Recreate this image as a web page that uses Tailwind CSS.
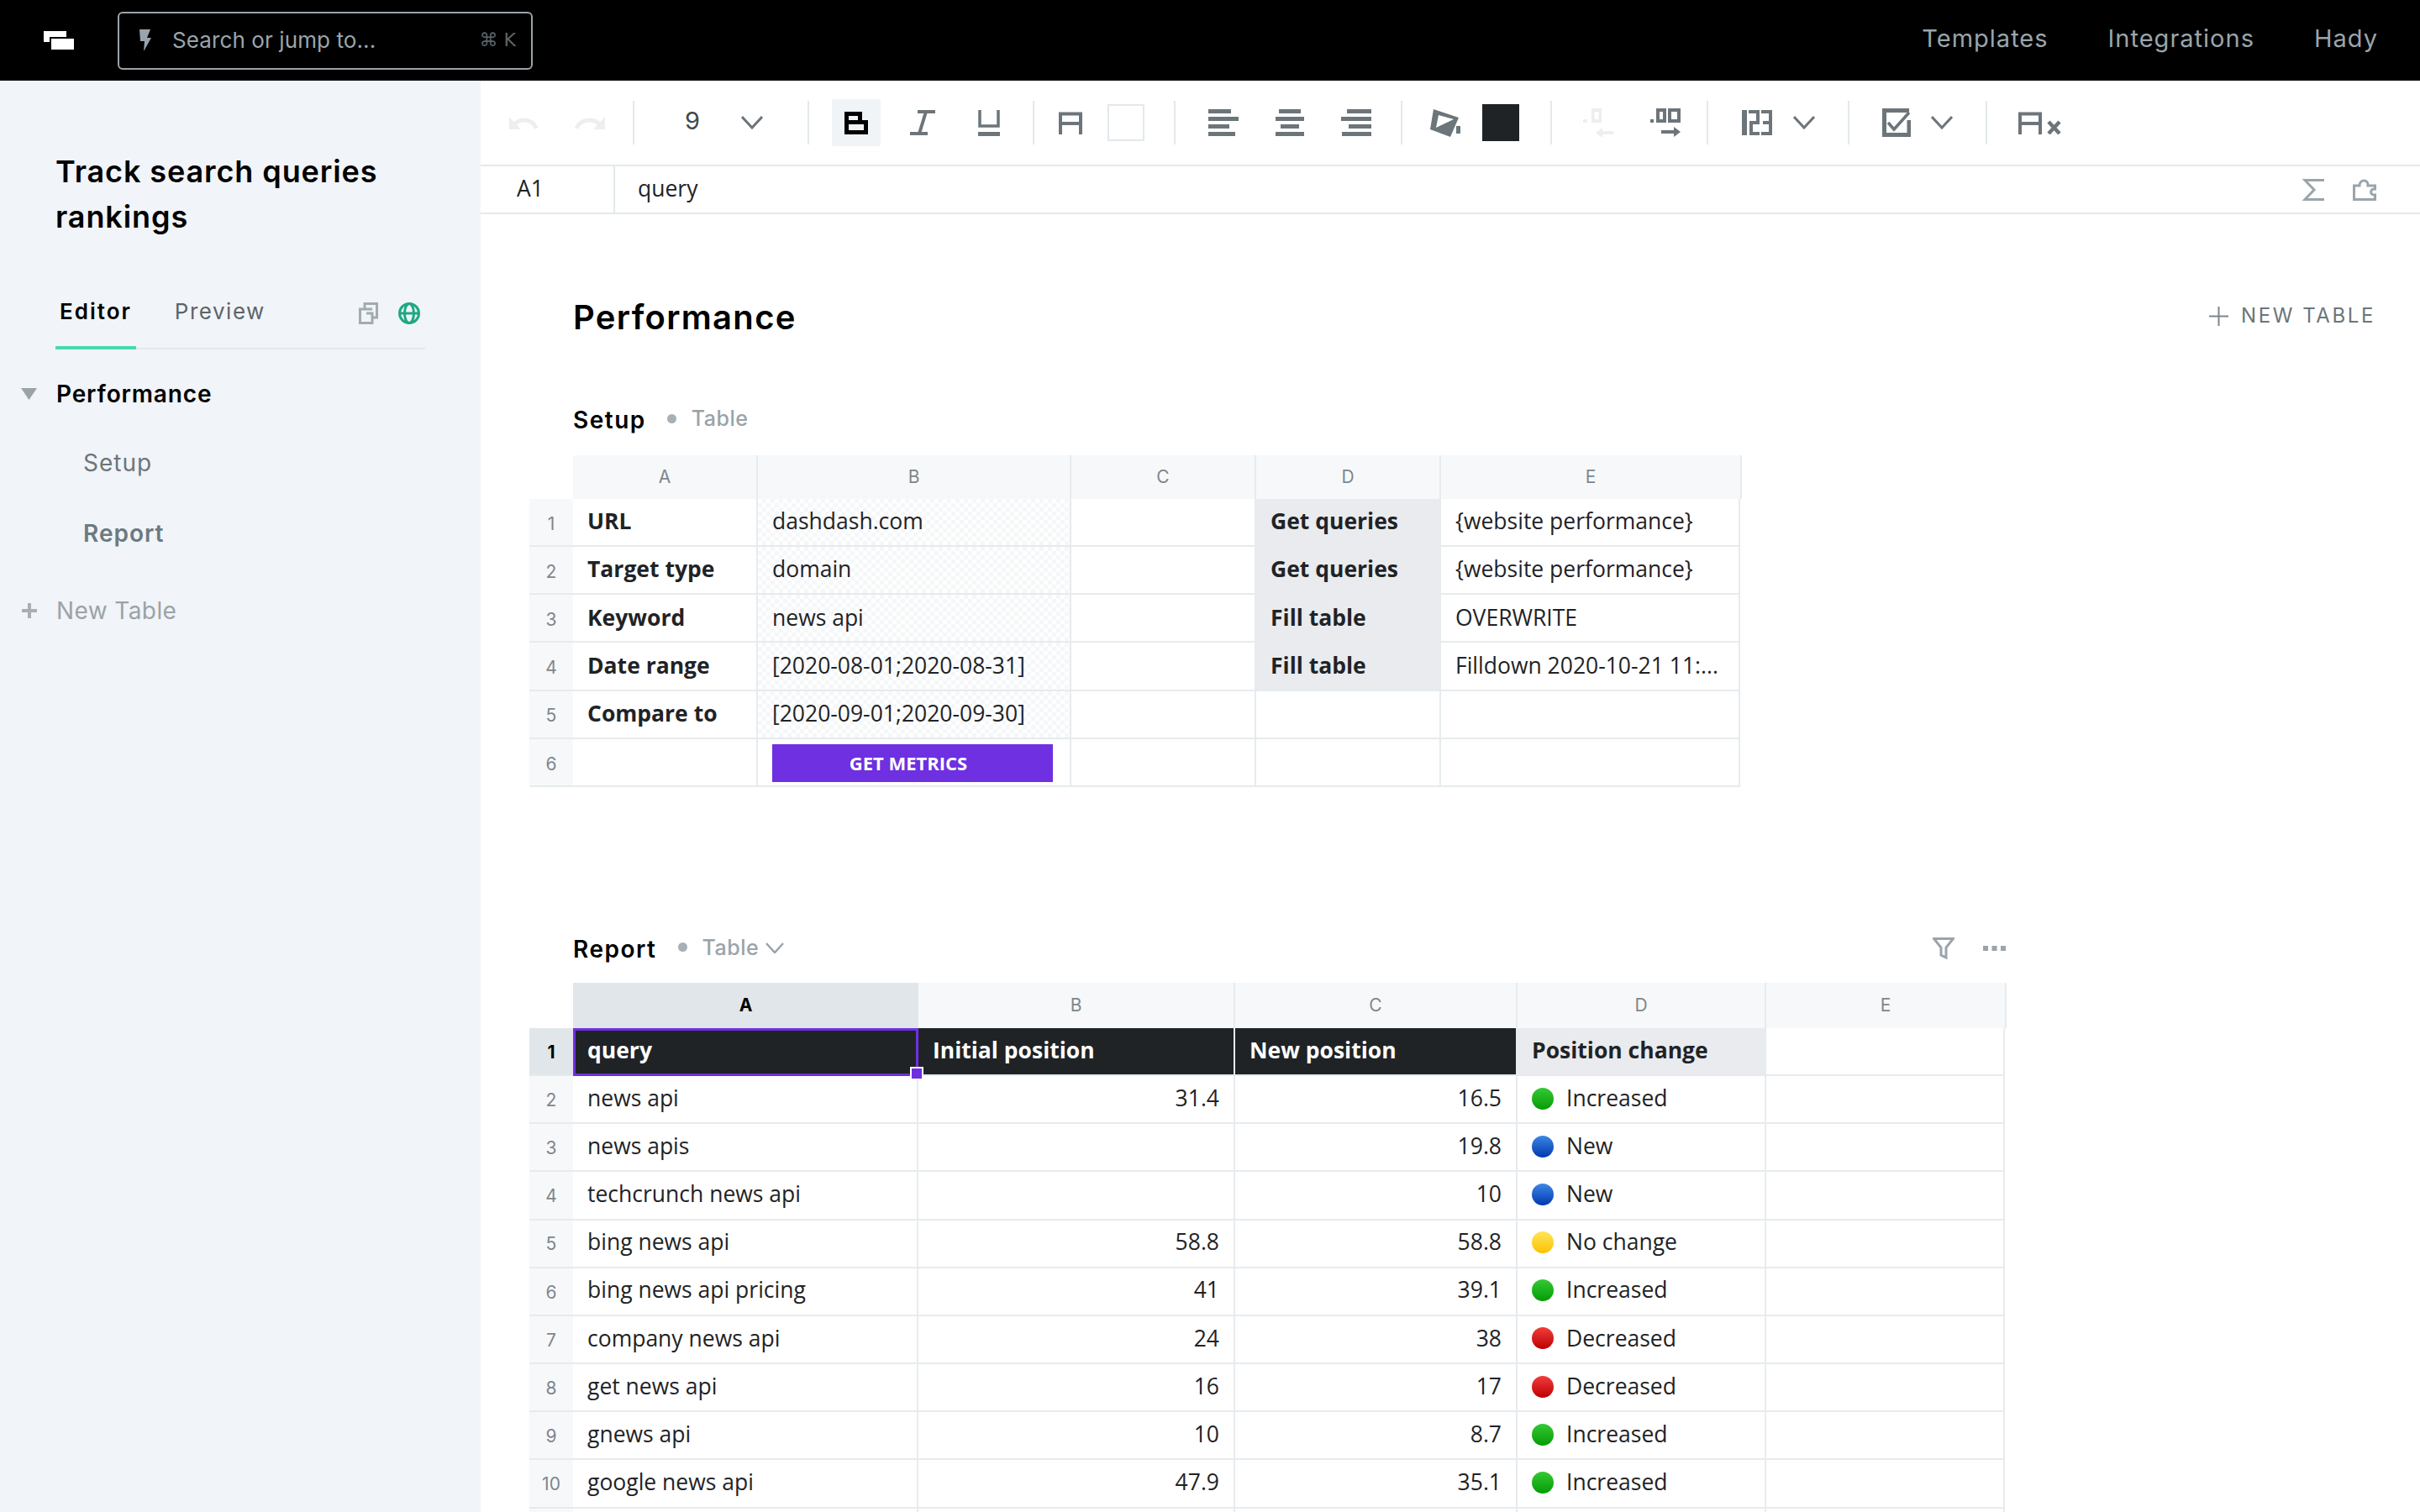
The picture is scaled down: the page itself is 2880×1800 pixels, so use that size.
<!DOCTYPE html>
<html lang="en">
<head>
<meta charset="UTF-8">
<title>Track search queries rankings</title>
<script src="https://cdn.jsdelivr.net/npm/@tailwindcss/browser@4"></script>
</head>
<body class="bg-white">
<div class="w-[2880px] h-[1800px] overflow-hidden flex flex-col font-['Inter',sans-serif]">

    <!-- Top bar -->
    <header class="h-[96px] shrink-0 bg-black flex items-center">
        <svg class="ml-[52px]" width="36" height="22" viewBox="0 0 36 22"><rect width="27" height="13" fill="#fff"/><rect x="7" y="7" width="29" height="15" fill="#000"/><rect x="9" y="9" width="27" height="13" fill="#fff"/></svg>
        <div class="ml-[52px] w-[494px] h-[69px] border-2 border-[#9aa3a8] rounded-[6px] flex items-center">
            <svg class="ml-[23px]" width="15" height="26" viewBox="0 0 15 26"><path d="M1 0H14L10 10H15L6 26L7 14H2Z" fill="#9aa5ab"/></svg>
            <span class="ml-[25px] text-[26px] tracking-[0.1px] text-[#9aa5ab] -translate-y-[1px]">Search or jump to...</span>
            <span class="ml-auto mr-[18px] text-[22px] text-[#5d6468] font-['DejaVu_Sans'] -translate-y-[1px]">⌘ K</span>
        </div>
        <nav class="ml-auto mr-[50px] flex gap-[71px] text-[29px] tracking-[1px] text-[#9aa5ab] -translate-y-[2px]">
            <a href="#">Templates</a>
            <a href="#">Integrations</a>
            <a href="#">Hady</a>
        </nav>
    </header>

    <div class="flex flex-1 min-h-0">
        <!-- Sidebar -->
        <aside class="w-[572px] shrink-0 bg-[#f1f4f8] pt-[81px]">
            <h1 class="ml-[66px] w-[440px] text-[36px] leading-[54px] font-semibold tracking-[0.9px] text-black">Track search queries rankings</h1>
            <div class="ml-[66px] mt-[45px] w-[440px] h-[86px] pb-[3px] border-b-2 border-[#e3e9ec] flex items-center relative">
                <span class="ml-[5px] text-[26px] font-semibold tracking-[2px] text-black">Editor</span>
                <span class="ml-[51px] text-[26px] tracking-[1.5px] text-[#5d6468]">Preview</span>
                <svg class="ml-auto translate-y-[2px]" width="23" height="26" viewBox="0 0 23 26" fill="none" stroke="#a2abb0" stroke-width="3"><path d="M7 7V1.5H21.5V18H16"/><path d="M16 8H1.5V24.5H16V13H9"/></svg>
                <svg class="ml-[24px] mr-[6px] translate-y-[2px]" width="26" height="26" viewBox="0 0 26 26" fill="none" stroke="#1fa884" stroke-width="3"><circle cx="13" cy="13" r="11.5"/><ellipse cx="13" cy="13" rx="5.5" ry="11.5"/><path d="M2 13H24"/></svg>
                <div class="absolute left-0 -bottom-[2px] w-[96px] h-[4px] bg-[#4ad8b0]"></div>
            </div>
            <div class="mt-[32px] h-[42px] flex items-center">
                <svg class="ml-[25px]" width="19" height="14" viewBox="0 0 19 14"><path d="M0 0H19L9.5 14Z" fill="#9aa3a8"/></svg>
                <span class="ml-[23px] text-[28px] font-semibold tracking-[0.85px] text-black">Performance</span>
            </div>
            <div class="ml-[99px] mt-[40px] h-[42px] flex items-center text-[28px] tracking-[1px] text-[#6c757a]">Setup</div>
            <div class="ml-[99px] mt-[42px] h-[42px] flex items-center text-[28px] tracking-[1px] font-semibold text-[#6c7a80]">Report</div>
            <div class="mt-[50px] h-[42px] flex items-center">
                <svg class="ml-[26px]" width="18" height="18" viewBox="0 0 18 18"><path d="M7 0H11V7H18V11H11V18H7V11H0V7H7Z" fill="#a8b0b5"/></svg>
                <span class="ml-[23px] text-[28px] tracking-[0.4px] text-[#9aa3a8]">New Table</span>
            </div>
        </aside>

        <main class="flex-1 min-w-0 flex flex-col">
            <!-- Toolbar -->
            <div class="h-[102px] shrink-0 border-b-2 border-[#e3e9ec] flex items-center">
                <svg class="ml-[34px]" width="34" height="16" viewBox="0 0 34 16" fill="none"><path d="M32 15C29 5 15 1 6 10" stroke="#eceef0" stroke-width="5"/><path d="M0 1V16H14Z" fill="#eceef0"/></svg>
                <svg class="ml-[44px]" width="36" height="16" viewBox="0 0 36 16" fill="none"><path d="M2 15C6 5 20 1 30 10" stroke="#eceef0" stroke-width="5"/><path d="M36 1V16H22Z" fill="#eceef0"/></svg>
                <div class="ml-[33px] w-[2px] h-[52px] bg-[#e3e9ec]"></div>
                <span class="ml-[60px] w-[17px] text-[29px] text-[#444a4e] -translate-y-[2px]">9</span>
                <svg class="ml-[50px]" width="26" height="16" viewBox="0 0 26 16" fill="none" stroke="#6c757a" stroke-width="3"><path d="M1 1L13 14L25 1"/></svg>
                <div class="ml-[53px] w-[2px] h-[52px] bg-[#e3e9ec]"></div>
                <div class="ml-[27px] w-[58px] h-[56px] bg-[#f1f4f7] rounded-[2px] flex items-center justify-center">
                    <svg width="28" height="27" viewBox="0 0 28 27"><path fill-rule="evenodd" d="M0 0H21V10H28V27H0ZM5 5V10H16V5ZM5 15V22H23V15Z" fill="#000"/></svg>
                </div>
                <svg class="ml-[35px]" width="30" height="30" viewBox="0 0 30 30" fill="none" stroke="#6c757a" stroke-width="4"><path d="M9 2H30"/><path d="M0 28H21"/><path d="M19 2L11 28"/></svg>
                <svg class="ml-[51px]" width="26" height="31" viewBox="0 0 26 31" fill="none"><path d="M2 0V19H24V0" stroke="#6c757a" stroke-width="3.5"/><rect y="26" width="26" height="5" fill="#6c757a"/></svg>
                <div class="ml-[39px] w-[2px] h-[52px] bg-[#e3e9ec]"></div>
                <svg class="ml-[29px]" width="28" height="27" viewBox="0 0 28 27" fill="none" stroke="#6c757a" stroke-width="4"><path d="M2 27V2.5H26V27"/><path d="M2 14H26"/></svg>
                <div class="ml-[30px] w-[44px] h-[44px] border-2 border-[#e3e9ec] bg-white"></div>
                <div class="ml-[35px] w-[2px] h-[52px] bg-[#e3e9ec]"></div>
                <svg class="ml-[39px]" width="36" height="32" viewBox="0 0 36 32" fill="#6c757a"><rect width="27" height="5"/><rect y="9" width="36" height="5"/><rect y="18" width="25" height="5"/><rect y="27" width="32" height="5"/></svg>
                <svg class="ml-[44px]" width="34" height="32" viewBox="0 0 34 32" fill="#6c757a"><rect x="4" width="26" height="5"/><rect y="9" width="34" height="5"/><rect x="6" y="18" width="22" height="5"/><rect y="27" width="34" height="5"/></svg>
                <svg class="ml-[44px]" width="36" height="32" viewBox="0 0 36 32" fill="#6c757a"><rect x="7" width="29" height="5"/><rect y="9" width="36" height="5"/><rect x="9" y="18" width="27" height="5"/><rect x="1" y="27" width="35" height="5"/></svg>
                <div class="ml-[35px] w-[2px] h-[52px] bg-[#e3e9ec]"></div>
                <svg class="ml-[33px]" width="40" height="33" viewBox="0 0 40 33"><path fill-rule="evenodd" d="M4 0L34 10L24 33L0 24ZM10 7L7 22L28 12Z" fill="#6c757a"/><rect x="31" y="20" width="5" height="9" fill="#6c757a"/></svg>
                <div class="ml-[22px] w-[44px] h-[44px] bg-[#1f2326]"></div>
                <div class="ml-[37px] w-[2px] h-[52px] bg-[#e3e9ec]"></div>
                <svg class="ml-[37px]" width="36" height="35" viewBox="0 0 36 35" fill="#eceef0"><rect y="13" width="5" height="4"/><path fill-rule="evenodd" d="M10 0H22V17H10ZM13.500 4V13H18.500V4Z"/><path d="M15 29L23 23V27H36V31H23V35Z"/></svg>
                <!-- .00 with arrow -->
                <svg class="ml-[44px]" width="36" height="34" viewBox="0 0 36 34" fill="#6c757a"><rect y="13" width="4" height="4"/><path fill-rule="evenodd" d="M7 0H19V17H7ZM11 4V13H15V4Z"/><path fill-rule="evenodd" d="M21 0H36V17H21ZM25 4V13H32V4Z"/><path d="M36 28L28 22V26H13V30H28V34Z"/></svg>
                <div class="ml-[31px] w-[2px] h-[52px] bg-[#e3e9ec]"></div>
                <!-- 123 -->
                <svg class="ml-[40px]" width="36" height="30" viewBox="0 0 36 30" fill="none" stroke="#6c757a" stroke-width="4"><path d="M3 0V30" stroke-width="6"/><path d="M8 2H19V15H11V28H21"/><path d="M23 2H34V28H23"/><path d="M25 15H34"/></svg>
                <svg class="ml-[25px]" width="26" height="16" viewBox="0 0 26 16" fill="none" stroke="#6c757a" stroke-width="3"><path d="M1 1L13 14L25 1"/></svg>
                <div class="ml-[39px] w-[2px] h-[52px] bg-[#e3e9ec]"></div>
                <svg class="ml-[39px]" width="34" height="34" viewBox="0 0 34 34" fill="none" stroke="#6c757a"><path d="M32 2.500H2.500V31.500H32V14" stroke-width="5"/><path d="M7 17L14 25L32 5" stroke-width="3.500"/></svg>
                <svg class="ml-[24px]" width="26" height="16" viewBox="0 0 26 16" fill="none" stroke="#6c757a" stroke-width="3"><path d="M1 1L13 14L25 1"/></svg>
                <div class="ml-[39px] w-[2px] h-[52px] bg-[#e3e9ec]"></div>
                <svg class="ml-[37px]" width="51" height="27" viewBox="0 0 51 27" fill="none" stroke="#6c757a" stroke-width="4"><path d="M2 27V2.500H26V27"/><path d="M2 14H26"/><path d="M36 12L49 26M49 12L36 26" stroke-width="4.500"/></svg>
            </div>

            <!-- Formula bar -->
            <div class="h-[57px] shrink-0 border-b-2 border-[#e3e9ec] flex items-center font-['Open_Sans'] text-[26.5px] text-[#1f2326]">
                <div class="w-[160px] h-full pb-[2px] border-r-2 border-[#e3e9ec] flex items-center pl-[43px]">A1</div>
                <span class="ml-[27px] -translate-y-[1px]">query</span>
                <svg class="ml-auto" width="26" height="26" viewBox="0 0 26 26" fill="none" stroke="#9aa5ab" stroke-width="3"><path d="M26 1.500H3L14 13L3 24.500H26"/></svg>
                <svg class="ml-[34px] mr-[52px]" width="28" height="26" viewBox="0 0 28 26" fill="none" stroke="#9aa5ab" stroke-width="3"><path d="M1.500 24.500V8H8C8 0 19 0 18 8H26.500V12C20 11 20 20 26.500 19V24.500Z"/></svg>
            </div>

            <!-- Canvas -->
            <div class="flex-1 min-h-0 pt-[93px] pl-[58px] pr-[53px] overflow-hidden">
                <div class="ml-[52px] h-[60px] flex items-center justify-between">
                    <h2 class="text-[40px] font-semibold tracking-[1.3px] text-black">Performance</h2>
                    <div class="flex items-center text-[24px] tracking-[2.6px] text-[#6c757a] -translate-y-[2px]">
                        <svg width="23" height="23" viewBox="0 0 23 23"><path d="M10.500 0H12.500V10.500H23V12.500H12.500V23H10.500V12.500H0V10.500H10.500Z" fill="#7d868c"/></svg>
                        <span class="ml-[15px]">NEW TABLE</span>
                    </div>
                </div>

                <!-- Setup -->
                <div class="ml-[52px] mt-[71px] h-[40px] flex items-center">
                    <h3 class="text-[28px] font-semibold tracking-[1.5px] text-black translate-y-[1px]">Setup</h3>
                    <div class="ml-[25px] w-[11px] h-[11px] rounded-full bg-[#a8b0b5] -translate-y-[1px]"></div>
                    <span class="ml-[18px] text-[25px] font-medium tracking-[0.5px] text-[#9aa3a8]">Table</span>
                </div>
                <div class="mt-[23px] grid grid-cols-[52px_220px_373px_220px_220px_358px] h-[52px] text-[21px] text-[#7d868c] [&>div]:flex [&>div]:items-center [&>div]:justify-center [&>div]:bg-[#f7f8fa] [&>div]:border-r-2 [&>div]:border-[#e6ebee]">
                    <div class="bg-white! border-r-0!"></div>
                    <div>A</div><div>B</div><div>C</div><div>D</div><div>E</div>
                </div>
                <div class="grid grid-cols-[52px_220px_373px_220px_220px_358px] auto-rows-[57.17px] font-['Open_Sans'] text-[26.5px] text-[#1f2326] [&>div]:flex [&>div]:items-center [&>div]:whitespace-nowrap [&>div]:px-[17px] [&>div]:pb-[1px] [&>div]:border-r-2 [&>div]:border-b-2 [&>div]:border-[#e6ebee]">
                    <div class="justify-center bg-[#f7f8fa] border-r-0! pt-[5px] font-['Inter'] text-[21px] text-[#7d868c]">1</div><div class="font-bold">URL</div><div class="bg-[image:repeating-conic-gradient(#f5f7f8_0_25%,#fff_0_50%)] bg-[length:10px_10px]">dashdash.com</div><div></div><div class="bg-[#e9ebee] font-bold">Get queries</div><div class="mr-[2px]">{website performance}</div>
                    <div class="justify-center bg-[#f7f8fa] border-r-0! pt-[5px] font-['Inter'] text-[21px] text-[#7d868c]">2</div><div class="font-bold">Target type</div><div class="bg-[image:repeating-conic-gradient(#f5f7f8_0_25%,#fff_0_50%)] bg-[length:10px_10px]">domain</div><div></div><div class="bg-[#e9ebee] font-bold">Get queries</div><div class="mr-[2px]">{website performance}</div>
                    <div class="justify-center bg-[#f7f8fa] border-r-0! pt-[5px] font-['Inter'] text-[21px] text-[#7d868c]">3</div><div class="font-bold">Keyword</div><div class="bg-[image:repeating-conic-gradient(#f5f7f8_0_25%,#fff_0_50%)] bg-[length:10px_10px]">news api</div><div></div><div class="bg-[#e9ebee] font-bold">Fill table</div><div class="mr-[2px]">OVERWRITE</div>
                    <div class="justify-center bg-[#f7f8fa] border-r-0! pt-[5px] font-['Inter'] text-[21px] text-[#7d868c]">4</div><div class="font-bold">Date range</div><div class="bg-[image:repeating-conic-gradient(#f5f7f8_0_25%,#fff_0_50%)] bg-[length:10px_10px]">[2020-08-01;2020-08-31]</div><div></div><div class="bg-[#e9ebee] font-bold">Fill table</div><div class="mr-[2px]">Filldown 2020-10-21 11:...</div>
                    <div class="justify-center bg-[#f7f8fa] border-r-0! pt-[5px] font-['Inter'] text-[21px] text-[#7d868c]">5</div><div class="font-bold">Compare to</div><div class="bg-[image:repeating-conic-gradient(#f5f7f8_0_25%,#fff_0_50%)] bg-[length:10px_10px]">[2020-09-01;2020-09-30]</div><div></div><div></div><div class="mr-[2px]"></div>
                    <div class="justify-center bg-[#f7f8fa] border-r-0! pt-[5px] font-['Inter'] text-[21px] text-[#7d868c]">6</div><div></div><div><button class="w-[334px] h-[45px] mt-[4px] shrink-0 bg-[#6e30e0] text-white text-[22px] font-bold pr-[10px]">GET METRICS</button></div><div></div><div></div><div class="mr-[2px]"></div>
                </div>

                <!-- Report -->
                <div class="ml-[52px] mt-[172px] w-[1705px] h-[40px] flex items-center">
                    <h3 class="text-[28px] font-semibold tracking-[1.5px] text-black translate-y-[1px]">Report</h3>
                    <div class="ml-[25px] w-[11px] h-[11px] rounded-full bg-[#a8b0b5] -translate-y-[1px]"></div>
                    <span class="ml-[18px] text-[25px] font-medium tracking-[0.5px] text-[#9aa3a8]">Table</span>
                    <svg class="ml-[8px]" width="22" height="13" viewBox="0 0 22 13" fill="none" stroke="#9aa3a8" stroke-width="2.500"><path d="M1 1L11 12L21 1"/></svg>
                    <svg class="ml-auto" width="26" height="26" viewBox="0 0 26 26" fill="none" stroke="#9aa5ab" stroke-width="3"><path d="M1.500 1.500H24.500L16 12V24L10 21V12Z"/></svg>
                    <svg class="ml-[34px]" width="27" height="6" viewBox="0 0 27 6" fill="#9aa5ab"><rect width="6" height="6"/><rect x="10.500" width="6" height="6"/><rect x="21" width="6" height="6"/></svg>
                </div>
                <div class="mt-[21px] grid grid-cols-[52px_411px_377px_336px_296px_286px] h-[54px] text-[21px] text-[#7d868c] [&>div]:flex [&>div]:items-center [&>div]:justify-center [&>div]:border-r-2 [&>div]:border-[#e6ebee]">
                    <div class="border-r-0!"></div>
                    <div class="bg-[#e0e6e9] font-bold text-black border-r-0!">A</div><div class="bg-[#f7f8fa]">B</div><div class="bg-[#f7f8fa]">C</div><div class="bg-[#f7f8fa]">D</div><div class="bg-[#f7f8fa]">E</div>
                </div>
                <div class="grid grid-cols-[52px_411px_377px_336px_296px_286px] auto-rows-[57.17px] font-['Open_Sans'] text-[26.5px] text-[#1f2326] [&>div]:flex [&>div]:items-center [&>div]:whitespace-nowrap [&>div]:px-[17px] [&>div]:pb-[2px] [&>div]:border-r-2 [&>div]:border-b-2 [&>div]:border-[#e6ebee]">
                    <div class="justify-center bg-[#e0e6e9] border-r-0! pt-[4px] font-['Inter'] font-bold text-[21px] text-black">1</div>
                    <div class="relative bg-[#1f2326] text-white font-bold outline-[3px] outline-[#6e30e0] -outline-offset-[3px] z-10">query<span class="absolute -right-[8px] -bottom-[7px] w-[16px] h-[16px] bg-[#6e30e0] border-2 border-white"></span></div>
                    <div class="bg-[#1f2326] text-white font-bold">Initial position</div><div class="bg-[#1f2326] text-white font-bold">New position</div><div class="bg-[#e9ebee] font-bold">Position change</div><div class="mr-[2px]"></div>

                    <div class="justify-center bg-[#f7f8fa] border-r-0! pt-[4px] font-['Inter'] text-[21px] text-[#7d868c]">2</div><div>news api</div><div class="justify-end">31.4</div><div class="justify-end">16.5</div><div><i class="w-[26px] h-[26px] rounded-full mr-[15px] bg-[linear-gradient(#35c935,#049c04)]"></i>Increased</div><div class="mr-[2px]"></div>
                    <div class="justify-center bg-[#f7f8fa] border-r-0! pt-[4px] font-['Inter'] text-[21px] text-[#7d868c]">3</div><div>news apis</div><div class="justify-end"></div><div class="justify-end">19.8</div><div><i class="w-[26px] h-[26px] rounded-full mr-[15px] bg-[linear-gradient(#3c87e4,#0038b0)]"></i>New</div><div class="mr-[2px]"></div>
                    <div class="justify-center bg-[#f7f8fa] border-r-0! pt-[4px] font-['Inter'] text-[21px] text-[#7d868c]">4</div><div>techcrunch news api</div><div class="justify-end"></div><div class="justify-end">10</div><div><i class="w-[26px] h-[26px] rounded-full mr-[15px] bg-[linear-gradient(#3c87e4,#0038b0)]"></i>New</div><div class="mr-[2px]"></div>
                    <div class="justify-center bg-[#f7f8fa] border-r-0! pt-[4px] font-['Inter'] text-[21px] text-[#7d868c]">5</div><div>bing news api</div><div class="justify-end">58.8</div><div class="justify-end">58.8</div><div><i class="w-[26px] h-[26px] rounded-full mr-[15px] bg-[linear-gradient(#ffe55a,#fcc200)]"></i>No change</div><div class="mr-[2px]"></div>
                    <div class="justify-center bg-[#f7f8fa] border-r-0! pt-[4px] font-['Inter'] text-[21px] text-[#7d868c]">6</div><div>bing news api pricing</div><div class="justify-end">41</div><div class="justify-end">39.1</div><div><i class="w-[26px] h-[26px] rounded-full mr-[15px] bg-[linear-gradient(#35c935,#049c04)]"></i>Increased</div><div class="mr-[2px]"></div>
                    <div class="justify-center bg-[#f7f8fa] border-r-0! pt-[4px] font-['Inter'] text-[21px] text-[#7d868c]">7</div><div>company news api</div><div class="justify-end">24</div><div class="justify-end">38</div><div><i class="w-[26px] h-[26px] rounded-full mr-[15px] bg-[linear-gradient(#f23c3c,#bd0000)]"></i>Decreased</div><div class="mr-[2px]"></div>
                    <div class="justify-center bg-[#f7f8fa] border-r-0! pt-[4px] font-['Inter'] text-[21px] text-[#7d868c]">8</div><div>get news api</div><div class="justify-end">16</div><div class="justify-end">17</div><div><i class="w-[26px] h-[26px] rounded-full mr-[15px] bg-[linear-gradient(#f23c3c,#bd0000)]"></i>Decreased</div><div class="mr-[2px]"></div>
                    <div class="justify-center bg-[#f7f8fa] border-r-0! pt-[4px] font-['Inter'] text-[21px] text-[#7d868c]">9</div><div>gnews api</div><div class="justify-end">10</div><div class="justify-end">8.7</div><div><i class="w-[26px] h-[26px] rounded-full mr-[15px] bg-[linear-gradient(#35c935,#049c04)]"></i>Increased</div><div class="mr-[2px]"></div>
                    <div class="justify-center bg-[#f7f8fa] border-r-0! pt-[4px] font-['Inter'] text-[21px] text-[#7d868c]">10</div><div>google news api</div><div class="justify-end">47.9</div><div class="justify-end">35.1</div><div><i class="w-[26px] h-[26px] rounded-full mr-[15px] bg-[linear-gradient(#35c935,#049c04)]"></i>Increased</div><div class="mr-[2px]"></div>
                    <div class="bg-[#f7f8fa] border-r-0!"></div><div></div><div></div><div></div><div></div><div class="mr-[2px]"></div>
                </div>
            </div>
        </main>
    </div>
</div>
</body>
</html>
